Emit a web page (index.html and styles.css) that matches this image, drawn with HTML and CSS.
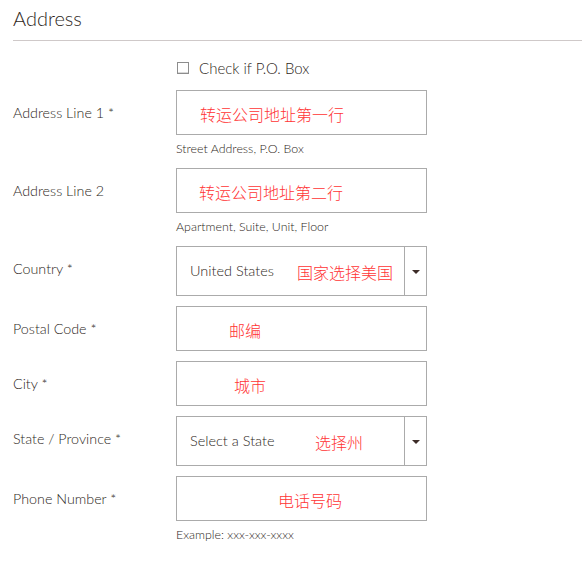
FILE: index.html
```html
<!DOCTYPE html>
<html lang="en">
<head>
<meta charset="utf-8">
<title>Address</title>
<link rel="stylesheet" href="styles.css">
</head>
<body>
<section class="address">
  <h2 class="title">Address</h2>

  <div class="check-row">
    <span class="checkbox"></span>
    <span class="check-label">Check if P.O. Box</span>
  </div>

  <div class="row">
    <label class="label">Address Line 1 *</label>
    <div class="control">
      <div class="field"><span class="note note-l1">转运公司地址第一行</span></div>
      <div class="help">Street Address, P.O. Box</div>
    </div>
  </div>

  <div class="row">
    <label class="label">Address Line 2</label>
    <div class="control">
      <div class="field"><span class="note note-l2">转运公司地址第二行</span></div>
      <div class="help">Apartment, Suite, Unit, Floor</div>
    </div>
  </div>

  <div class="row">
    <label class="label">Country *</label>
    <div class="control">
      <div class="field select">
        <span class="value">United States</span>
        <span class="arrow"></span>
        <span class="note note-country">国家选择美国</span>
      </div>
    </div>
  </div>

  <div class="row">
    <label class="label">Postal Code *</label>
    <div class="control">
      <div class="field"><span class="note note-postal">邮编</span></div>
    </div>
  </div>

  <div class="row">
    <label class="label">City *</label>
    <div class="control">
      <div class="field"><span class="note note-city">城市</span></div>
    </div>
  </div>

  <div class="row">
    <label class="label">State / Province *</label>
    <div class="control">
      <div class="field select">
        <span class="value">Select a State</span>
        <span class="arrow"></span>
        <span class="note note-state">选择州</span>
      </div>
    </div>
  </div>

  <div class="row">
    <label class="label">Phone Number *</label>
    <div class="control">
      <div class="field"><span class="note note-phone">电话号码</span></div>
      <div class="help">Example: xxx-xxx-xxxx</div>
    </div>
  </div>
</section>
</body>
</html>
```

FILE: styles.css
```css
* { box-sizing: border-box; }

html, body {
  margin: 0;
  padding: 0;
  background: #ffffff;
}

body {
  font-family: "Lato", "Open Sans", sans-serif;
  font-weight: 300;
  color: #2e1f1b;
}

.address {
  padding: 0 0 0 13px;
}

.title {
  margin: 0;
  height: 41px;
  padding-top: 6px;
  font-size: 20px;
  line-height: 24px;
  font-weight: 300;
  border-bottom: 1px solid #cfc9c9;
}

.check-row {
  display: flex;
  align-items: center;
  margin: 20px 0 15px 164px;
  height: 14px;
}

.checkbox {
  width: 12px;
  height: 12px;
  border: 1px solid #8d8d8d;
  box-shadow: inset 0 -1px 0 #d8d8d8;
  margin-right: 10px;
}

.check-label {
  font-size: 15px;
  line-height: 14px;
}

.row {
  display: flex;
  margin-bottom: 10px;
}

.label {
  width: 163px;
  padding-top: 14px;
  font-size: 14.3px;
  line-height: 18px;
}

.control {
  width: 251px;
}

.field {
  position: relative;
  height: 45px;
  border: 1px solid #ababab;
  display: flex;
  align-items: center;
}

.field.select {
  height: 50px;
  padding-left: 13px;
}

.value {
  flex: 1;
  font-size: 14.5px;
  line-height: 18px;
}

.arrow {
  position: relative;
  width: 22px;
  height: 100%;
  border-left: 1px solid #ababab;
}

.arrow::after {
  content: "";
  position: absolute;
  left: 7px;
  top: 23px;
  border-left: 4px solid transparent;
  border-right: 4px solid transparent;
  border-top: 4px solid #3d2c28;
}

.note {
  position: absolute;
  top: 50%;
  transform: translateY(-46%);
  font-family: "Noto Sans CJK SC", sans-serif;
  font-weight: 300;
  font-size: 16px;
  line-height: 20px;
  color: #ff3434;
  white-space: nowrap;
}

.note-l1 { left: 23px; }
.note-l2 { left: 22px; }
.note-country { left: 120px; }
.note-postal { left: 52px; }
.note-city { left: 57px; }
.note-state { left: 138px; }
.note-phone { left: 101px; }

.help {
  margin-top: 7px;
  height: 16px;
  font-size: 12.4px;
  line-height: 14px;
}
```
